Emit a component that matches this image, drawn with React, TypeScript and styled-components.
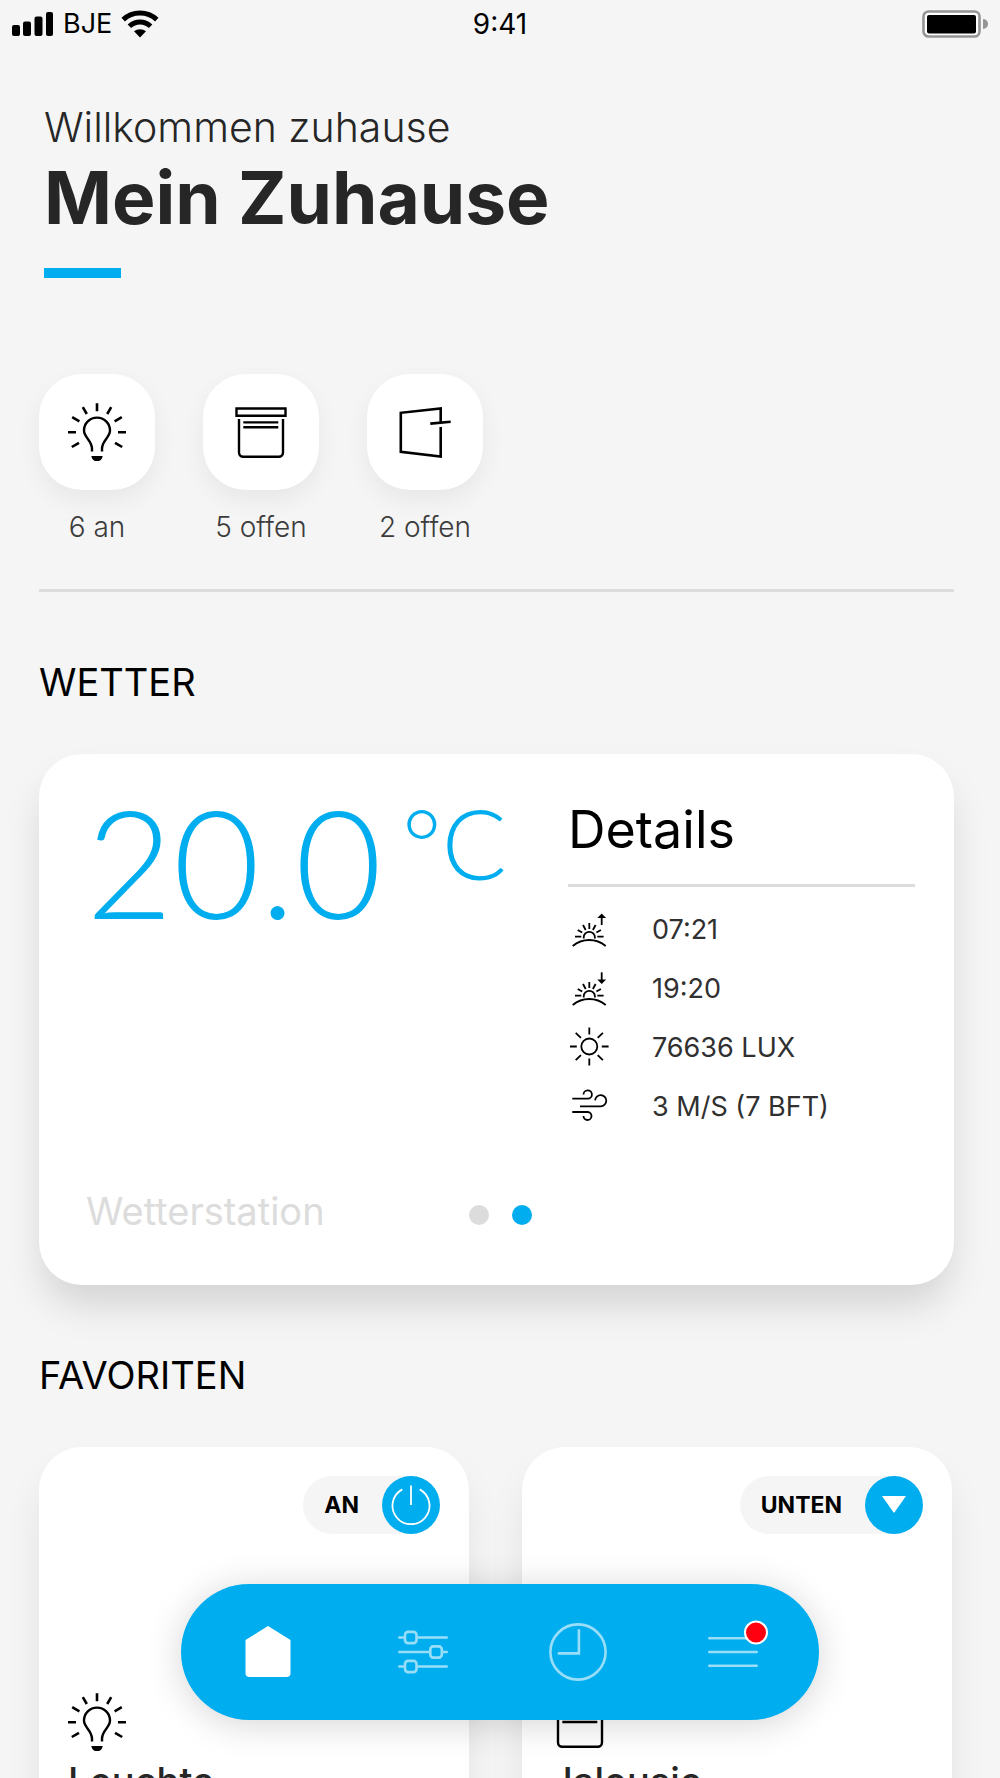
import React from 'react';
import styled, { createGlobalStyle } from 'styled-components';

const blue = '#00adee';
const ink = '#262626';
const line = '#dcdcdc';

const GlobalStyle = createGlobalStyle`
  *, *::before, *::after { box-sizing: border-box; }
  body {
    margin: 0;
    background: #f5f5f5;
    color: #000;
    font-family: Inter, "Liberation Sans", sans-serif;
  }
  h1, h2, h3, p, ul { margin: 0; padding: 0; font-weight: 400; }
  ul { list-style: none; }
  button { border: 0; padding: 0; background: none; font: inherit; color: inherit; cursor: pointer; }
  svg { display: block; }
`;

const Shell = styled.div`
  position: relative;
  height: 100vh;
  overflow: hidden;
`;

const Scroller = styled.div`
  height: 100%;
  overflow-y: auto;
  scrollbar-width: none;
`;

const StatusBar = styled.div`
  display: grid;
  grid-template-columns: 1fr auto 1fr;
  align-items: center;
  height: 48px;
  padding: 0 12px;
  font-size: 28px;
  line-height: 48px;
`;

const Carrier = styled.div`
  display: flex;
  align-items: center;
  gap: 9px;
  font-size: 27px;
`;

const Battery = styled.div`
  justify-self: end;
`;

const Page = styled.main`
  padding: 55px 46px 0 39px;
`;

const Header = styled.header`
  padding-left: 5px;
`;

const Greeting = styled.p`
  font-size: 41px;
  font-weight: 300;
  line-height: 48px;
  color: ${ink};
`;

const Title = styled.h1`
  font-size: 73px;
  font-weight: 700;
  line-height: 94px;
  color: ${ink};
  &::after {
    content: '';
    display: block;
    width: 77px;
    height: 10px;
    margin-top: 23px;
    background: ${blue};
  }
`;

const Tiles = styled.ul`
  display: flex;
  gap: 48px;
  margin-top: 96px;
  padding-bottom: 44px;
  border-bottom: 3px solid ${line};
`;

const Tile = styled.li`
  width: 116px;
`;

const TileButton = styled.button`
  display: flex;
  flex-direction: column;
  align-items: center;
  gap: 19px;
  width: 100%;
  font-size: 28px;
  font-weight: 300;
  line-height: 36px;
  color: #3c3c3c;
`;

const TileFace = styled.span`
  display: grid;
  place-items: center;
  width: 116px;
  height: 116px;
  border-radius: 43px;
  background: #fff;
  color: #000;
  box-shadow: 0 10px 24px rgba(0, 0, 0, 0.06);
`;

const SectionTitle = styled.h2`
  margin: 66px 0 48px;
  font-size: 38px;
  line-height: 48px;
`;

const WeatherCard = styled.section`
  padding: 38px 39px 51px 47px;
  border-radius: 43px;
  background: #fff;
  box-shadow: 0 24px 40px -6px rgba(0, 0, 0, 0.15);
`;

const WeatherBody = styled.div`
  display: grid;
  grid-template-columns: 1fr 347px;
`;

const Temperature = styled.p`
  display: flex;
  align-items: flex-start;
  gap: 20px;
  font-family: Lato, "Liberation Sans", sans-serif;
  font-size: 150px;
  font-weight: 300;
  line-height: 138px;
  color: ${blue};
`;

const Unit = styled.span`
  font-size: 96px;
  line-height: 102px;
`;

const DetailsTitle = styled.h3`
  padding-bottom: 16px;
  border-bottom: 3px solid ${line};
  font-size: 52px;
  line-height: 76px;
`;

const DetailList = styled.ul`
  display: grid;
  gap: 19px;
  margin-top: 23px;
  padding-left: 1px;
`;

const Detail = styled.li`
  display: flex;
  align-items: center;
  gap: 43px;
  font-size: 27px;
  line-height: 40px;
  color: #303030;
  svg { color: #000; }
`;

const WeatherFooter = styled.div`
  display: grid;
  grid-template-columns: 1fr auto 1fr;
  align-items: baseline;
  margin-top: 61px;
`;

const Station = styled.p`
  font-size: 38px;
  line-height: 46px;
  color: ${line};
`;

const Pager = styled.div`
  display: flex;
  gap: 23px;
`;

const PagerDot = styled.button<{ $active?: boolean }>`
  width: 20px;
  height: 20px;
  border-radius: 50%;
  background: ${(p) => (p.$active ? blue : line)};
`;

const Favorites = styled.div`
  display: grid;
  grid-template-columns: 1fr 1fr;
  gap: 53px;
  padding-right: 2px;
`;

const FavoriteCard = styled.article`
  display: flex;
  flex-direction: column;
  align-items: flex-start;
  padding: 29px;
  border-radius: 43px;
  background: #fff;
  box-shadow: 0 24px 40px -6px rgba(0, 0, 0, 0.1);
`;

const Pill = styled.button`
  display: flex;
  align-items: center;
  align-self: flex-end;
  gap: 23px;
  margin-bottom: 159px;
  padding-left: 21px;
  border-radius: 29px;
  background: #f5f5f5;
  font-size: 23px;
  font-weight: 700;
  line-height: 58px;
`;

const PillKnob = styled.span`
  display: grid;
  place-items: center;
  width: 58px;
  height: 58px;
  border-radius: 50%;
  background: ${blue};
`;

const FavoriteName = styled.h3`
  margin-top: 6px;
  font-size: 38px;
  font-weight: 500;
  line-height: 48px;
  color: ${ink};
`;

const NavBar = styled.nav`
  position: absolute;
  left: 50%;
  bottom: 58px;
  transform: translateX(-50%);
  display: grid;
  grid-template-columns: repeat(4, 155px);
  padding: 0 9px;
  border-radius: 68px;
  background: ${blue};
  box-shadow: 0 4px 36px rgba(0, 0, 0, 0.17);
`;

const NavButton = styled.button<{ $active?: boolean }>`
  display: grid;
  place-items: center;
  height: 136px;
  color: ${(p) => (p.$active ? '#fff' : '#99def8')};
`;

const LampIcon = () => (
  <svg width="58" height="58" viewBox="0 0 58 58" fill="none" stroke="currentColor" strokeWidth="2.6" aria-hidden="true">
    <path d="M29 .3v8M14.8 4.2l4 6.8M43.2 4.2l-4 6.8M4.2 14.2l7.2 4.2M53.8 14.2l-7.2 4.2M0 29.2h8M50 29.2h8M3.8 44l7.2-4.2M54.2 44L47 39.8" />
    <path strokeWidth="2.4" d="M24 48.6V46c0-4-1.6-6.7-3.8-9.6C17.6 33.2 16 31 16 27.6a13 13 0 0 1 26 0c0 3.4-1.6 5.6-4.2 8.8-2.2 2.9-3.8 5.6-3.8 9.6v2.6" />
    <path fill="currentColor" stroke="none" d="M23.4 53h11.2a5.6 5.3 0 0 1-11.2 0z" />
  </svg>
);

const BlindIcon = ({ closed }: { closed?: boolean }) => (
  <svg width="58" height="58" viewBox="0 0 58 58" fill="none" stroke="currentColor" strokeWidth="2.4" aria-hidden="true">
    <path d="M4.5 5.5h49v7.2h-49zM11.3 19.4h35M11.3 24.2h35M7 16v33.6a4.2 4.2 0 0 0 4.2 4.2h35.6a4.2 4.2 0 0 0 4.2-4.2V16" />
    {closed && <path d="M11.3 29h35" />}
  </svg>
);

const WindowIcon = () => (
  <svg width="58" height="58" viewBox="0 0 58 58" fill="none" stroke="currentColor" strokeWidth="2.6" aria-hidden="true">
    <path d="M44.7 19.4V5.4L4.8 9.8v39L44.7 53.6V24M34.3 20.6l20.4-1.9" />
  </svg>
);

const Horizon = ({ down }: { down?: boolean }) => (
  <svg width="40" height="40" viewBox="0 0 40 40" fill="none" stroke="currentColor" strokeWidth="1.8" aria-hidden="true">
    <path d="M3.7 36c9.5-8 23.5-8 33 0M14.7 28.4v-1a5.6 5.6 0 0 1 11.2 0v1M6 26.7h6.3M28.3 26.7h6.3M20.3 13v6M14 15l2.7 5M26.6 15l-2.7 5M8.7 20l4.5 2.5M31.9 20l-4.5 2.5" />
    <path d={down ? 'M32.7 3.3V12' : 'M32.7 6v9'} />
    <path fill="currentColor" stroke="none" d={down ? 'M28.3 10.5h8.8l-4.4 4.5z' : 'M28.3 8h8.8l-4.4-4.5z'} />
  </svg>
);

const SunIcon = () => (
  <svg width="40" height="40" viewBox="0 0 40 40" fill="none" stroke="currentColor" strokeWidth="1.8" overflow="visible" aria-hidden="true">
    <circle cx="20.3" cy="18.5" r="8" />
    <path d="M20.3-.5v7M20.3 30.5v7M1 18.5h6.8M32.8 18.5h6.8M6.7 4.9l5.2 4.9M33.9 4.9l-5.2 4.9M6.7 32.1l5.2-5M33.9 32.1l-5.2-5" />
  </svg>
);

const WindIcon = () => (
  <svg width="40" height="40" viewBox="0 0 40 40" fill="none" stroke="currentColor" strokeWidth="1.8" aria-hidden="true">
    <path d="M3.3 11.7h15.5a4.2 4.2 0 1 0-4.3-4.2M11 19.3h20.7a5.6 5.6 0 1 0-5.6-5.9M3.3 25h15.5a4 4 0 1 1-4.3 4" />
  </svg>
);

const SignalIcon = () => (
  <svg width="42" height="26" viewBox="0 0 42 26" fill="currentColor" aria-hidden="true">
    <rect x="0" y="14" width="8" height="11" rx="2" />
    <rect x="11" y="10.5" width="8" height="14.5" rx="2" />
    <rect x="22.5" y="5.5" width="8" height="19.5" rx="2" />
    <rect x="34" y="1" width="7" height="24" rx="2" />
  </svg>
);

const WifiIcon = () => (
  <svg width="38" height="28" viewBox="0 0 38 28" fill="none" stroke="currentColor" strokeWidth="5" aria-hidden="true">
    <path d="M2.2 9.6a24.5 24.5 0 0 1 33.6 0M8.4 16.2a15.4 15.4 0 0 1 21.2 0" />
    <path fill="currentColor" stroke="none" d="M19 27.5l-6-6.2c3.6-2.8 8.4-2.8 12 0z" />
  </svg>
);

const BatteryIcon = () => (
  <svg width="66" height="28" viewBox="0 0 66 28" aria-hidden="true">
    <rect x="1.5" y="1.5" width="56" height="25" rx="5" fill="#fff" stroke="#959595" strokeWidth="2.6" />
    <rect x="5" y="5" width="49" height="18.5" rx="2" />
    <path d="M61 9a5 5 0 0 1 0 10z" fill="#959595" />
  </svg>
);

const PowerIcon = () => (
  <svg width="40" height="40" viewBox="0 0 40 40" fill="none" stroke="#fff" strokeWidth="1.8" aria-hidden="true">
    <path d="M20 .5v19.5M11.3 4.4a18.5 18.5 0 1 0 17.4 0" />
  </svg>
);

const DownIcon = () => (
  <svg width="24" height="18" viewBox="0 0 24 18" fill="#fff" aria-hidden="true">
    <path d="M0 0h24L12 17z" />
  </svg>
);

const HomeIcon = () => (
  <svg width="46" height="52" viewBox="0 0 46 52" fill="currentColor" aria-hidden="true">
    <path d="M23 0l22.5 14v33a4 4 0 0 1-4 4h-37a4 4 0 0 1-4-4V14z" />
  </svg>
);

const SlidersIcon = () => (
  <svg width="50" height="44" viewBox="0 0 50 44" fill="none" stroke="currentColor" strokeWidth="2.6" strokeLinecap="round" aria-hidden="true">
    <path d="M1.3 7.5h5M19.5 7.5h29.2M1.3 22h30.2M44.7 22h4M1.3 36.5h5M19.5 36.5h29.2" />
    <rect x="7" y="1.9" width="11.5" height="11.2" rx="3" />
    <rect x="32.3" y="16.4" width="11.5" height="11.2" rx="3" />
    <rect x="7" y="30.9" width="11.5" height="11.2" rx="3" />
  </svg>
);

const ClockIcon = () => (
  <svg width="58" height="58" viewBox="0 0 58 58" fill="none" stroke="currentColor" strokeWidth="2.6" aria-hidden="true">
    <circle cx="29" cy="29" r="27.6" />
    <path d="M29.9 6.2v24.2H8.7" />
  </svg>
);

const MenuIcon = () => (
  <svg width="50" height="32" viewBox="0 0 50 32" fill="none" stroke="currentColor" strokeWidth="2.6" strokeLinecap="round" overflow="visible" aria-hidden="true">
    <path d="M1.3 2.3h47.4M1.3 16h47.4M1.3 29.7h47.4" />
    <circle cx="48" cy="-3.5" r="11" fill="#ff0010" stroke="#fff" strokeWidth="2" />
  </svg>
);

const tiles = [
  { label: '6 an', icon: <LampIcon /> },
  { label: '5 offen', icon: <BlindIcon /> },
  { label: '2 offen', icon: <WindowIcon /> },
];

const details = [
  { value: '07:21', icon: <Horizon /> },
  { value: '19:20', icon: <Horizon down /> },
  { value: '76636 LUX', icon: <SunIcon /> },
  { value: '3 M/S (7 BFT)', icon: <WindIcon /> },
];

const favorites = [
  { name: 'Leuchte', state: 'AN', knob: <PowerIcon />, icon: <LampIcon /> },
  { name: 'Jalousie', state: 'UNTEN', knob: <DownIcon />, icon: <BlindIcon closed /> },
];

const nav = [
  { label: 'Zuhause', icon: <HomeIcon />, active: true },
  { label: 'Einstellungen', icon: <SlidersIcon /> },
  { label: 'Zeitprogramme', icon: <ClockIcon /> },
  { label: 'Menü', icon: <MenuIcon /> },
];

export default function App() {
  return (
    <Shell>
      <GlobalStyle />
      <Scroller>
        <StatusBar>
          <Carrier>
            <SignalIcon />
            <span>BJE</span>
            <WifiIcon />
          </Carrier>
          <time>9:41</time>
          <Battery><BatteryIcon /></Battery>
        </StatusBar>
        <Page>
          <Header>
            <Greeting>Willkommen zuhause</Greeting>
            <Title>Mein Zuhause</Title>
          </Header>
          <Tiles>
            {tiles.map((t) => (
              <Tile key={t.label}>
                <TileButton type="button">
                  <TileFace>{t.icon}</TileFace>
                  {t.label}
                </TileButton>
              </Tile>
            ))}
          </Tiles>
          <SectionTitle>WETTER</SectionTitle>
          <WeatherCard>
            <WeatherBody>
              <Temperature>20.0<Unit>°C</Unit></Temperature>
              <div>
                <DetailsTitle>Details</DetailsTitle>
                <DetailList>
                  {details.map((d) => (
                    <Detail key={d.value}>{d.icon}{d.value}</Detail>
                  ))}
                </DetailList>
              </div>
            </WeatherBody>
            <WeatherFooter>
              <Station>Wetterstation</Station>
              <Pager>
                <PagerDot type="button" aria-label="Seite 1" />
                <PagerDot type="button" aria-label="Seite 2" $active />
              </Pager>
            </WeatherFooter>
          </WeatherCard>
          <SectionTitle>FAVORITEN</SectionTitle>
          <Favorites>
            {favorites.map((f) => (
              <FavoriteCard key={f.name}>
                <Pill type="button">
                  {f.state}
                  <PillKnob>{f.knob}</PillKnob>
                </Pill>
                {f.icon}
                <FavoriteName>{f.name}</FavoriteName>
              </FavoriteCard>
            ))}
          </Favorites>
        </Page>
      </Scroller>
      <NavBar aria-label="Hauptnavigation">
        {nav.map((n) => (
          <NavButton key={n.label} type="button" aria-label={n.label} $active={n.active}>{n.icon}</NavButton>
        ))}
      </NavBar>
    </Shell>
  );
}
